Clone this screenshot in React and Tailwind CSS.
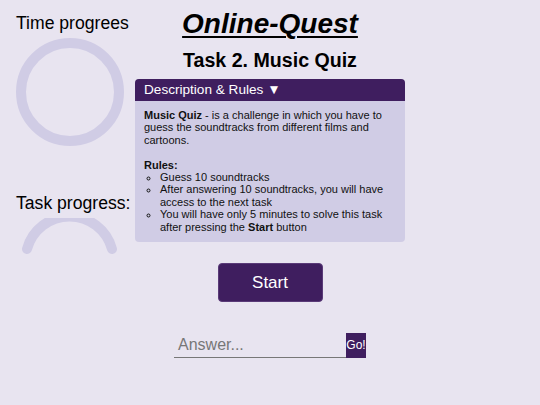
import React from "react";

export default function App() {
  return (
    <div className="w-[540px] h-[405px] bg-[#e8e4f0] text-black overflow-hidden" style={{ fontFamily: '"Liberation Sans", Arial, sans-serif' }}>
      <div className="grid grid-cols-[135px_270px_135px]">
        <div className="pl-4 pt-[12px] flex flex-col">
          <div className="text-[17.6px] leading-[22px] whitespace-nowrap">Time progrees</div>
          <svg width="110" height="110" viewBox="0 0 110 110" className="mt-[4px] ml-0">
            <circle cx="54" cy="54" r="49" fill="none" stroke="#d0cce5" strokeWidth="10" />
          </svg>
          <div className="text-[17.6px] leading-[22px] mt-[44px] whitespace-nowrap">Task progress:</div>
          <svg width="110" height="50" viewBox="0 0 110 50" className="mt-[4px]">
            <path d="M11 31 A44 44 0 0 1 96 31" fill="none" stroke="#d0cce5" strokeWidth="10" strokeLinecap="round" />
          </svg>
        </div>
        <div className="flex flex-col items-center">
          <h1 className="text-[28px] leading-[32px] font-bold italic underline underline-offset-[3px] decoration-[2px] mt-[8px]">Online-Quest</h1>
          <h2 className="text-[19.6px] leading-[24px] font-bold mt-[8px]">Task 2. Music Quiz</h2>
          <div className="w-[270px] mt-[7px] rounded-[4px] overflow-hidden bg-[#d0cce5]">
            <div className="bg-[#3f1e5f] text-white text-[13.6px] leading-[22px] px-[9px]">Description &amp; Rules ▼</div>
            <div className="px-[9px] pt-[8px] pb-[9px] text-[11px] leading-[12.4px] text-[#111]">
              <p><b>Music Quiz</b> - is a challenge in which you have to guess the soundtracks from different films and cartoons.</p>
              <p className="mt-[12.4px] font-bold">Rules:</p>
              <ul className="pl-[16px] list-[circle]">
                <li>Guess 10 soundtracks</li>
                <li>After answering 10 soundtracks, you will have access to the next task</li>
                <li>You will have only 5 minutes to solve this task after pressing the <b>Start</b> button</li>
              </ul>
            </div>
          </div>
          <button className="mt-[21px] w-[105px] h-[39px] rounded-[4px] bg-[#3f1e5f] border border-[#5a3a78] text-white text-[17px]">Start</button>
          <div className="mt-[31px] flex items-stretch">
            <div className="w-[172px] h-[25px] border-b border-[#777] text-[16px] leading-[24px] text-[#777] pl-[4px]">Answer...</div>
            <div className="w-[20px] h-[25px] bg-[#3f1e5f] text-white text-[12px] leading-[25px] text-center">Go!</div>
          </div>
        </div>
        <div></div>
      </div>
    </div>
  );
}
